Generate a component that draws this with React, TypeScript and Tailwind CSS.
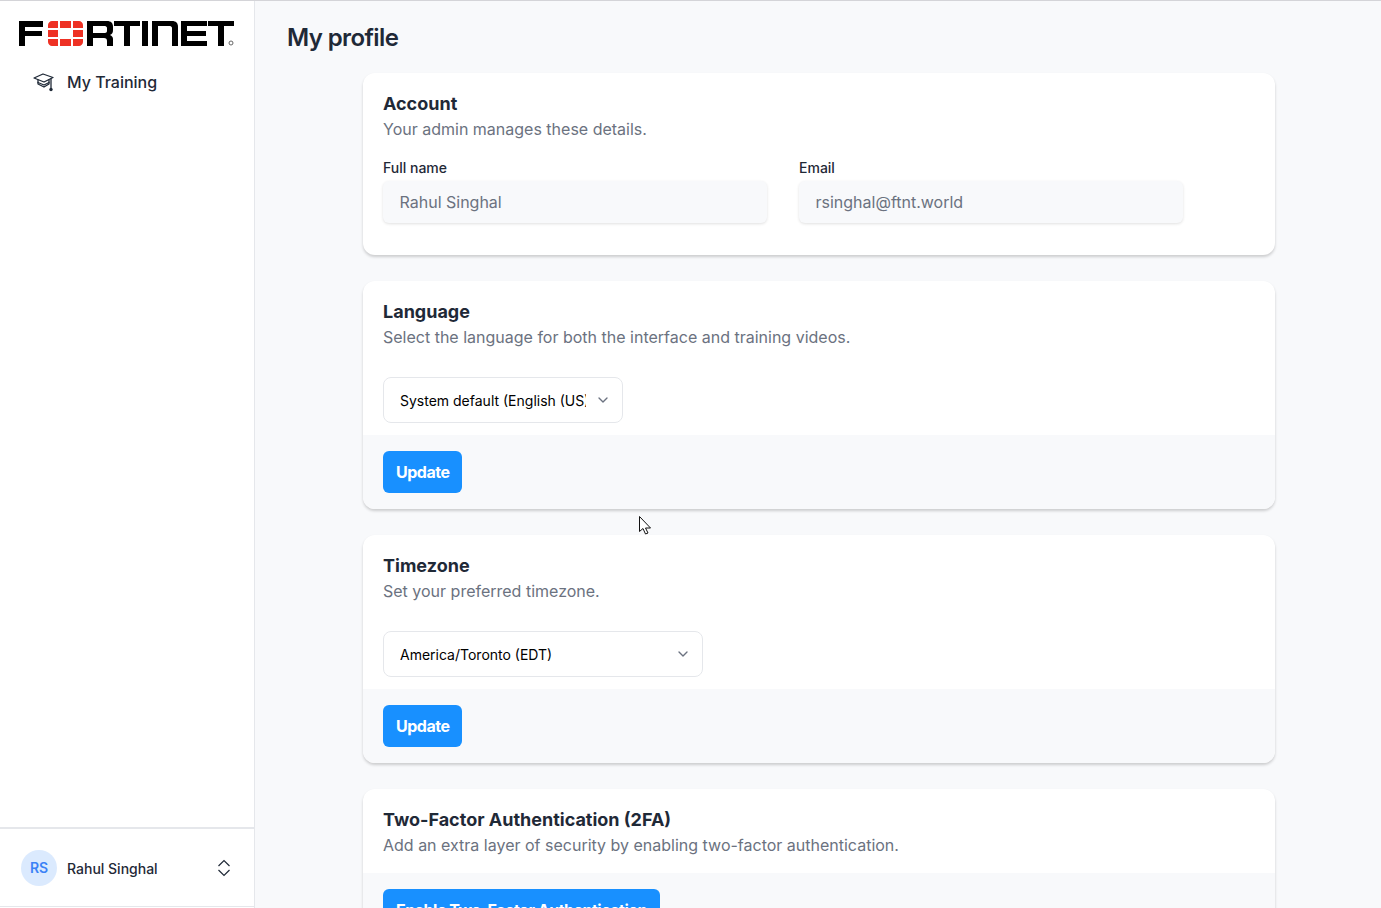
import { ChevronDown } from "lucide-react";

function Logo() {
  return (
    <svg width="216" height="27" viewBox="0 0 216 27" className="block">
      <g fill="#000">
        {/* F */}
        <path d="M0 1h24v6H6v4h17v5H6v10H0z" />
        {/* R */}
        <path fillRule="evenodd" d="M68 1h20c4 0 6 2 6 6v3c0 3-1 4-3 5 2 1 3 2 3 4v7h-6v-5c0-2-1-3-3-3H74v8h-6zm6 5v7h12c1 0 2-1 2-2V8c0-1-1-2-2-2z" />
        {/* T */}
        <path d="M95 1h26v5h-10v20h-6V6H95z" />
        {/* I */}
        <path d="M123 1h6v25h-6z" />
        {/* N */}
        <path d="M133 26V1h20c4 0 6 2 6 6v19h-6V8c0-1-1-2-2-2h-12v20z" />
        {/* E */}
        <path d="M162 1h26v5h-20v5h19v5h-19v5h20v5h-26z" />
        {/* T */}
        <path d="M189 1h26v5h-10v20h-6V6h-10z" />
      </g>
      <g fill="#ee3124">
        <path d="M29 8V5c0-2 2-4 4-4h6v7zM41 1h11v7H41zM54 1h6c2 0 4 2 4 4v3H54z" />
        <path d="M29 10h10v7H29zM54 10h10v7H54z" />
        <path d="M29 19h10v7h-6c-2 0-4-2-4-4zM41 19h11v7H41zM54 19h10v3c0 2-2 4-4 4h-6z" />
      </g>
      <circle cx="212" cy="23" r="2" fill="none" stroke="#666" strokeWidth="1" />
    </svg>
  );
}

function CapIcon() {
  return (
    <svg width="21" height="19" viewBox="0 0 21 19" fill="none" stroke="#1f2937" strokeWidth="1.3" strokeLinejoin="round" strokeLinecap="round">
      <path d="M1 5 10 1l10 3.500L11 9z" />
      <path d="M5 7v4l6 3 5-3V7" />
      <path d="M5 9.500 11 12l5-2.500" />
      <path d="M18 6v9" />
      <circle cx="18" cy="16.500" r="1.700" fill="#1f2937" stroke="none" />
    </svg>
  );
}

function Card({ title, desc, children }: { title: string; desc: string; children?: React.ReactNode }) {
  return (
    <section className="bg-white rounded-xl overflow-hidden shadow-[0_2px_3px_rgba(0,0,0,0.18)]">
      <div className="px-5 pt-[19px]">
        <h2 className="text-lg leading-6 font-bold text-[#1f2937]">{title}</h2>
        <p className="mt-px text-base leading-6 text-[#6b7280]">{desc}</p>
      </div>
      {children}
    </section>
  );
}

function SelectBox({ value, width }: { value: string; width: string }) {
  return (
    <div className={`relative ${width}`}>
      <select
        defaultValue={value}
        className="w-full h-[46px] appearance-none rounded-lg border border-[#e5e7eb] bg-white pl-4 pr-9 pt-0.5 text-sm text-black outline-none"
      >
        <option>{value}</option>
      </select>
      <ChevronDown className="absolute right-[12px] top-[15px] w-4 h-4 text-[#6b7280] pointer-events-none" />
    </div>
  );
}

function Footer({ label }: { label: string }) {
  return (
    <div className="bg-[#f8f9fb] px-5 py-4">
      <button className="h-[42px] px-[13px] rounded-md bg-[#1890ff] text-white text-base font-bold tracking-[-0.5px]">{label}</button>
    </div>
  );
}

function Field({ label, value }: { label: string; value: string }) {
  return (
    <div>
      <label className="block text-sm leading-5 font-medium text-[#1f2937] mb-[3px]">{label}</label>
      <input
        readOnly
        value={value}
        className="w-full h-[42px] rounded-md bg-[#f8f9fb] px-[16.5px] text-base text-[#6b7280] outline-none shadow-[0_1px_3px_rgba(0,0,0,0.12)]"
      />
    </div>
  );
}

export default function App() {
  return (
    <div className="relative h-screen overflow-hidden flex bg-[#f8f9fb] border-t border-[#d4d4d8] font-['Inter',sans-serif]">
      <aside className="w-[255px] shrink-0 bg-white border-r border-[#e5e7eb] flex flex-col">
        <div className="pl-[19px] pt-[19px]">
          <Logo />
        </div>
        <a className="mt-[23px] ml-[33px] flex items-center gap-[13px] text-base font-medium text-[#1f2937]">
          <CapIcon />
          My Training
        </a>
        <div className="mt-auto h-[80px] mb-px border-t-2 border-[#e5e7eb] border-b flex items-center pl-[21px] pr-[23px]">
          <span className="w-9 h-9 rounded-full bg-[#dbeafe] text-[#3b82f6] text-sm font-semibold flex items-center justify-center">RS</span>
          <span className="ml-[10px] mt-0.5 text-sm font-medium text-[#1f2937]">Rahul Singhal</span>
          <svg width="14" height="18" viewBox="0 0 14 18" fill="none" stroke="#1f2937" strokeWidth="1.2" className="ml-auto">
            <path d="m1.500 7 5.500-5.500L12.500 7M1.500 11l5.500 5.500 5.500-5.500" />
          </svg>
        </div>
      </aside>

      <main className="flex-1 min-w-0 pl-8 pt-[21px]">
        <h1 className="text-2xl leading-8 font-semibold tracking-tight text-[#1f2937]">My profile</h1>
        <div className="ml-[76px] mt-[19px] w-[912px] flex flex-col gap-[26px]">
          <Card title="Account" desc="Your admin manages these details.">
            <div className="px-5 pt-[17px] pb-8 w-[840px]">
              <div className="grid grid-cols-2 gap-8">
                <Field label="Full name" value="Rahul Singhal" />
                <Field label="Email" value="rsinghal@ftnt.world" />
              </div>
            </div>
          </Card>
          <Card title="Language" desc="Select the language for both the interface and training videos.">
            <div className="px-5 pt-[28px] pb-3">
              <SelectBox value="System default (English (US))" width="w-[240px]" />
            </div>
            <Footer label="Update" />
          </Card>
          <Card title="Timezone" desc="Set your preferred timezone.">
            <div className="px-5 pt-[28px] pb-3">
              <SelectBox value="America/Toronto (EDT)" width="w-[320px]" />
            </div>
            <Footer label="Update" />
          </Card>
          <Card title="Two-Factor Authentication (2FA)" desc="Add an extra layer of security by enabling two-factor authentication.">
            <div className="h-4" />
            <Footer label="Enable Two-Factor Authentication" />
          </Card>
        </div>
      </main>

      {/* mouse pointer */}
      <svg width="14" height="20" viewBox="0 0 14 20" className="absolute left-[638px] top-[514px]">
        <path d="M1.500 1.500v15l3.500-3 2.500 5.500 2.500-1-2.500-5h5z" fill="#fff" stroke="#111" strokeWidth="1" strokeLinejoin="round" />
      </svg>
    </div>
  );
}
